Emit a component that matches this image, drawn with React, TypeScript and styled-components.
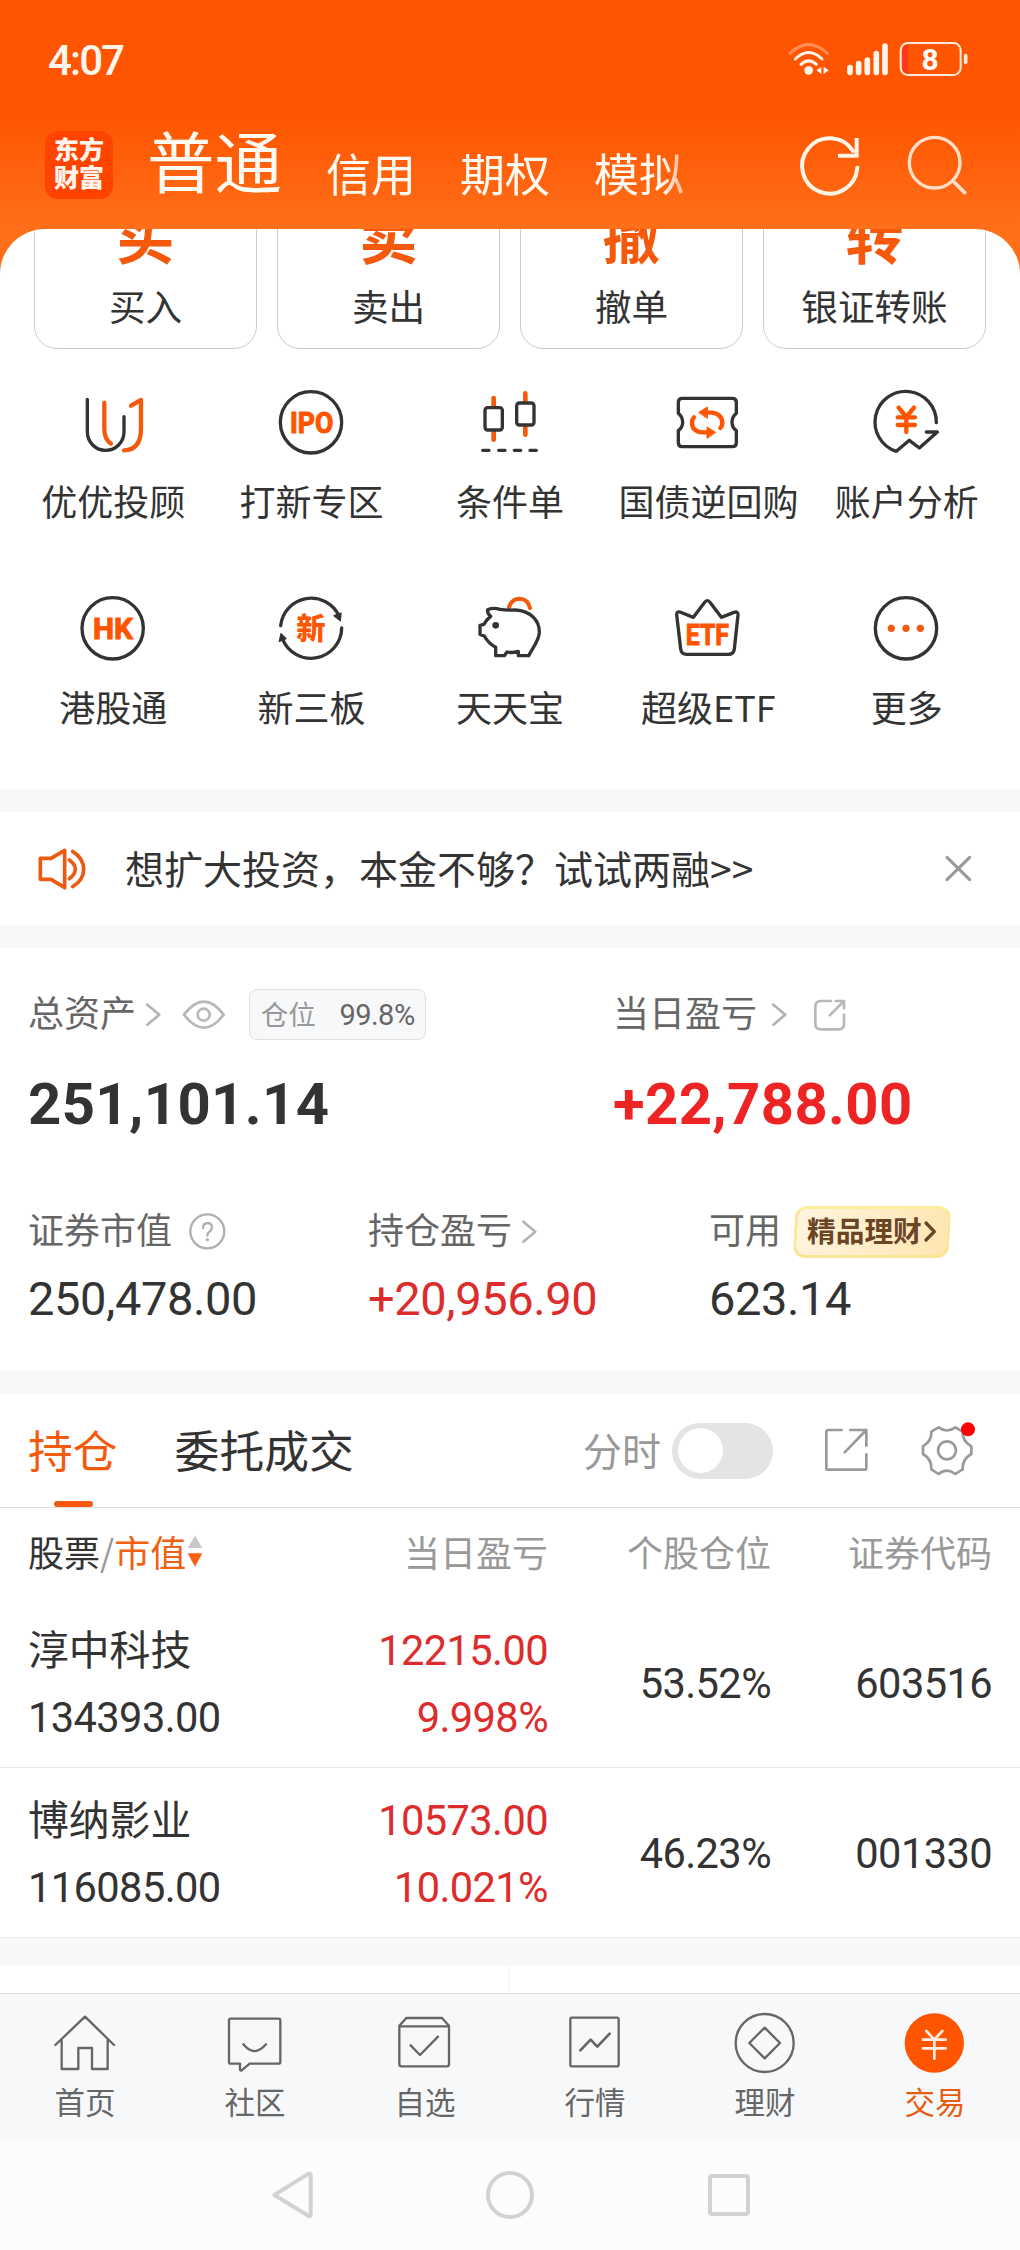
import React from "react";
import styled, { createGlobalStyle, css } from "styled-components";

const CJK = '"Noto Sans CJK SC", "Noto Sans", sans-serif';
const NUM = 'Roboto, "Noto Sans CJK SC", sans-serif';
const INK = "#333333";
const ORANGE = "#f55a0c";
const BRAND = "#ff5500";
const RED = "#dc2c2c";

const GlobalStyle = createGlobalStyle`
  * { box-sizing: border-box; }
  body { margin: 0; background: #fff; font-family: ${CJK}; color: ${INK}; }
  svg { display: block; flex: none; overflow: visible; }
`;

/* Icons are drawn on a grid of three units per pixel. */
interface GlyphProps {
  box: [number, number, number, number];
  stroke?: string;
  weight?: number;
  children: React.ReactNode;
}
const Glyph = ({ box, stroke = INK, weight = 10, children }: GlyphProps) => (
  <svg
    width={box[2] / 3}
    height={box[3] / 3}
    viewBox={box.join(" ")}
    fill="none"
    stroke={stroke}
    strokeWidth={weight}
    strokeLinecap="round"
    strokeLinejoin="round"
  >
    {children}
  </svg>
);

const Screen = styled.div`
  width: 1020px;
  height: 2250px;
  overflow: hidden;
  display: flex;
  flex-direction: column;
  background: linear-gradient(#ff5500 0 115px, #ff6e19 225px, #ff6e19 300px, #fff 300px);
`;

/* ---------- header ---------- */
const StatusBar = styled.div`
  height: 119px;
  padding: 37px 52px 0 48px;
  display: flex;
  justify-content: space-between;
  align-items: flex-start;
  color: #fff6ee;
`;
const Clock = styled.span`
  font: 500 42px/48px ${NUM};
  letter-spacing: -1.9px;
`;
const StatusIcons = styled.div`
  display: flex;
  padding-top: 3px;
`;
const TitleBar = styled.div`
  height: 110px;
  padding: 12px 50px 0 45px;
  display: flex;
  align-items: flex-start;
`;
const Logo = styled.div`
  width: 68px;
  height: 68px;
  border-radius: 13px;
  background: #ff4400;
  color: #fff4ee;
  font-family: ${NUM};
  font-size: 25px;
  font-weight: 900;
  line-height: 28px;
  padding-top: 6px;
  text-align: center;
`;
const AccountTabs = styled.div`
  display: flex;
  align-items: baseline;
  width: 550px;
  height: 98px;
  margin: -12px 0 0 34px;
  mask-image: linear-gradient(90deg, #000 515px, rgba(0, 0, 0, 0.55) 537px);
`;
const AccountTab = styled.span<{ $active?: boolean }>`
  color: #fffaf2;
  white-space: nowrap;
  font-size: ${(p) => (p.$active ? 67.5 : 45)}px;
  line-height: 80px;
  margin-right: 44px;
  transform: translateY(${(p) => (p.$active ? 0 : 4)}px);
`;
const HeaderTools = styled.div`
  display: flex;
  margin-left: auto;
  padding-top: 2px;
  gap: 42px;
`;

/* ---------- main panel ---------- */
const Panel = styled.main`
  height: 560px;
  flex: none;
  background: #fff;
  border-radius: 45px 45px 0 0;
  overflow: hidden;
`;
const ActionRow = styled.div`
  display: flex;
  gap: 20px;
  padding: 0 34px;
  margin-top: -60px;
`;
const ActionCard = styled.div`
  flex: 1;
  height: 180px;
  border: 1px solid #cccccc;
  border-radius: 23px;
  display: flex;
  flex-direction: column;
  align-items: center;
`;
const ActionMark = styled.span`
  margin-top: 32px;
  font-size: 58px;
  line-height: 64px;
  font-weight: 700;
  color: ${ORANGE};
`;
const ActionLabel = styled.span`
  margin-top: 15px;
  font-size: 36.6px;
  line-height: 50px;
`;
const ServiceGrid = styled.div`
  display: grid;
  grid-template-columns: repeat(5, 1fr);
  row-gap: 68px;
  padding: 38px 14px 0;
`;
const Service = styled.div`
  display: flex;
  flex-direction: column;
  align-items: center;
`;
const ServiceLabel = styled.span`
  margin-top: 18px;
  font-size: 36px;
  line-height: 50px;
  white-space: nowrap;
`;

const Band = styled.div<{ $h?: number }>`
  height: ${(p) => p.$h ?? 23}px;
  flex: none;
  background: #f7f8fa;
`;

const Notice = styled.div`
  height: 113px;
  flex: none;
  background: #fff;
  display: flex;
  align-items: center;
  padding: 0 48px 0 36px;
`;
const NoticeText = styled.span`
  flex: 1;
  margin-left: 37px;
  padding-bottom: 4px;
  font-size: 39px;
  line-height: 56px;
`;

/* ---------- assets ---------- */
const Assets = styled.section`
  height: 423px;
  flex: none;
  background: #fff;
  padding: 40px 0 0 28px;
`;
const AssetGrid = styled.div<{ $cols: string; $top?: number }>`
  display: grid;
  grid-template-columns: ${(p) => p.$cols};
  margin-top: ${(p) => p.$top ?? 0}px;
`;
const LabelRow = styled.div`
  display: flex;
  align-items: center;
  height: 53px;
`;
const Label = styled.span`
  font-size: 36px;
  line-height: 46px;
  padding-bottom: 7px;
  color: #666;
  white-space: nowrap;
`;
const Gap = styled.span<{ $w: number }>`
  width: ${(p) => p.$w}px;
  flex: none;
`;
const BigNumber = styled.div<{ $red?: boolean }>`
  margin-top: 33px;
  font: 700 58px/60px ${NUM};
  letter-spacing: 0.4px;
  color: ${(p) => (p.$red ? "#ee2424" : INK)};
`;
const MidNumber = styled.div<{ $red?: boolean }>`
  margin-top: 16px;
  font: 400 47px/50px ${NUM};
  letter-spacing: -0.4px;
  color: ${(p) => (p.$red ? RED : INK)};
`;
const PositionChip = styled.span`
  width: 177px;
  height: 51px;
  border: 1px solid #e0e0e3;
  border-radius: 8px;
  background: #f7f8fa;
  display: flex;
  align-items: center;
  justify-content: space-between;
  padding: 0 10px 0 11px;
  font-size: 27.5px;
  line-height: 40px;
  color: #999;
  b {
    font: 400 29px/40px ${NUM};
    letter-spacing: -0.5px;
    color: #666;
  }
  span { padding-bottom: 3px; }
`;
const WealthBadge = styled.span`
  position: relative;
  z-index: 0;
  width: 158px;
  height: 52px;
  display: flex;
  align-items: center;
  padding-left: 14px;
  font-size: 28.7px;
  line-height: 40px;
  font-weight: 700;
  color: #6a4526;
  &::before {
    content: "";
    position: absolute;
    z-index: -1;
    inset: 0 1px;
    border-radius: 12px;
    border: 3px solid #fae795;
    border-top-color: #fbee9c;
    background: linear-gradient(100deg, #fff4de, #ffe6b2);
    transform: skewX(-3deg);
  }
  span { padding-bottom: 3px; white-space: nowrap; }
`;

/* ---------- holdings ---------- */
const TabRow = styled.div`
  height: 114px;
  flex: none;
  background: #fff;
  border-bottom: 1px solid #dedede;
  display: flex;
  align-items: center;
  padding: 0 45px 0 28px;
`;
const Tab = styled.span<{ $active?: boolean }>`
  position: relative;
  font-size: 44.8px;
  line-height: 60px;
  padding-bottom: 4px;
  margin-right: 57px;
  white-space: nowrap;
  color: ${(p) => (p.$active ? ORANGE : INK)};
  ${(p) =>
    p.$active &&
    css`
      &::after {
        content: "";
        position: absolute;
        left: 26px;
        bottom: -24px;
        width: 39px;
        height: 6px;
        border-radius: 3px;
        background: ${ORANGE};
      }
    `}
`;
const MinuteLabel = styled.span`
  margin-left: auto;
  padding-bottom: 4px;
  font-size: 39px;
  line-height: 56px;
  color: #999;
`;
const Toggle = styled.span`
  width: 101px;
  height: 56px;
  margin: 0 52px 0 11px;
  border-radius: 28px;
  background: #e4e4e6;
  padding: 5px 6px;
  &::after {
    content: "";
    display: block;
    width: 45px;
    height: 45px;
    border-radius: 50%;
    background: #fff;
  }
`;
const rowGrid = css`
  display: grid;
  grid-template-columns: 297px 223px 223px 221px;
  padding: 0 28px;
  background: #fff;
  flex: none;
  text-align: right;
`;
const TableHead = styled.div`
  ${rowGrid};
  height: 90px;
  padding-top: 18px;
  font-size: 36px;
  line-height: 50px;
  color: #999;
`;
const SortHead = styled.span`
  display: flex;
  align-items: center;
  text-align: left;
  height: 50px;
  b { font-weight: 400; color: ${INK}; }
  em { font-style: normal; color: #f06010; margin-right: 1px; }
`;
const Holding = styled.div`
  ${rowGrid};
  height: 170px;
  border-bottom: 1px solid #e8e9eb;
  align-items: center;
`;
const Stack = styled.div<{ $left?: boolean }>`
  align-self: start;
  text-align: ${(p) => (p.$left ? "left" : "right")};
`;
const StockName = styled.div`
  margin-top: 20px;
  font-size: 40.8px;
  line-height: 60px;
`;
const Figure = styled.div<{ $red?: boolean; $top?: number }>`
  margin-top: ${(p) => p.$top ?? 2}px;
  font: 400 41.6px/60px ${NUM};
  letter-spacing: -0.6px;
  color: ${(p) => (p.$red ? RED : INK)};
`;
const Peek = styled.div`
  height: 27px;
  flex: none;
  background: linear-gradient(90deg, #fff 509px, #f4f5f7 509px 510px, #fff 510px);
`;

/* ---------- bottom ---------- */
const BottomNav = styled.nav`
  height: 147px;
  flex: none;
  border-top: 1px solid #dfe0e3;
  background: #f7f8fa;
  display: grid;
  grid-template-columns: repeat(6, 1fr);
  padding-top: 14px;
`;
const NavItem = styled.div<{ $active?: boolean }>`
  display: flex;
  flex-direction: column;
  align-items: center;
  gap: 1px;
  font-size: 30.5px;
  line-height: 44px;
  color: ${(p) => (p.$active ? "#e85c12" : "#666")};
`;
const SystemBar = styled.div`
  flex: 1;
  background: #fcfcfc;
  display: flex;
  justify-content: center;
  align-items: center;
  gap: 167px;
`;

const Chevron = () => (
  <Glyph box={[434, 697, 50, 76]} stroke="#b3b3b3" weight={8}>
    <path d="M441 705 L477 735 L441 765" />
  </Glyph>
);

const WordMark = ({ x, y, w, size, children }: { x: number; y: number; w: number; size: number; children: string }) => (
  <text
    x={x}
    y={y}
    textLength={w}
    lengthAdjust="spacingAndGlyphs"
    fontFamily={NUM}
    fontWeight={700}
    fontSize={size}
    fill={BRAND}
    stroke={BRAND}
    strokeWidth={3}
  >
    {children}
  </text>
);

const actions = [
  ["买", "买入"],
  ["卖", "卖出"],
  ["撤", "撤单"],
  ["转", "银证转账"],
];

const services: { label: string; icon: React.ReactNode }[] = [
  {
    label: "优优投顾",
    icon: (
      <Glyph box={[234, 81, 210, 210]}>
        <path d="M262 118 V216 a55 55 0 0 0 110 0 V170" />
        <path d="M313 128 V208 Q313 238 333 251 M393 137 L423 120 V205 Q423 271 372 271" stroke={ORANGE} strokeWidth={13} />
      </Glyph>
    ),
  },
  {
    label: "打新专区",
    icon: (
      <Glyph box={[830, 81, 210, 210]}>
        <circle cx={932} cy={187} r={92} />
        <WordMark x={869} y={218} w={130} size={86}>IPO</WordMark>
      </Glyph>
    ),
  },
  {
    label: "条件单",
    icon: (
      <Glyph box={[1425, 81, 210, 210]}>
        <path d="M1481 114 V143 M1481 210 V239 M1576 100 V129 M1576 195 V224" stroke={ORANGE} strokeWidth={14} />
        <rect x={1455} y={143} width={52} height={67} rx={8} fill="#fff" />
        <rect x={1550} y={129} width={52} height={66} rx={8} fill="#fff" />
        <path d="M1448 271 H1467 M1496 271 H1515 M1543 271 H1562 M1590 271 H1609" />
      </Glyph>
    ),
  },
  {
    label: "国债逆回购",
    icon: (
      <Glyph box={[490, 81, 210, 210]}>
        <path d="M518 115 H668 Q680 115 680 127 V160 Q667 170 667 187 Q667 203 680 212 V248 Q680 260 668 260 H518 Q506 260 506 248 V212 Q519 203 519 187 Q519 170 506 160 V127 Q506 115 518 115Z" />
        <path d="M592 158 H608 Q638 163 638 190 Q638 198 632 204 M553 172 Q547 178 547 188 Q547 214 578 217 H594" stroke={BRAND} strokeWidth={13} />
        <path d="M568 157 L593 141 V174Z M617 217 L592 201 V234Z" fill={BRAND} stroke={BRAND} strokeWidth={3} />
      </Glyph>
    ),
  },
  {
    label: "账户分析",
    icon: (
      <Glyph box={[1085, 81, 210, 210]}>
        <path d="M1278 188 A92 92 0 1 0 1158 274 L1197 241 L1227 264 L1281 216 H1248" />
        <path d="M1165 143 L1188 171 L1211 143 M1188 171 V216 M1162 172 H1214 M1162 195 H1214" stroke={BRAND} strokeWidth={13} />
      </Glyph>
    ),
  },
  {
    label: "港股通",
    icon: (
      <Glyph box={[234, 699, 210, 210]}>
        <circle cx={338} cy={805} r={92} />
        <WordMark x={279} y={837} w={120} size={86}>HK</WordMark>
      </Glyph>
    ),
  },
  {
    label: "新三板",
    icon: (
      <Glyph box={[830, 699, 210, 210]}>
        <path d="M841 797 A92 92 0 0 1 1016 768 M1024 804 A92 92 0 0 1 847 838" />
        <path d="M1001 767 L1022 759 L1020 782Z M842 821 L837 844 L857 836Z" fill={INK} stroke={INK} strokeWidth={4} />
        <text x={932} y={837} textAnchor="middle" fontFamily={CJK} fontWeight={900} fontSize={88} fill={BRAND} stroke="none">
          新
        </text>
      </Glyph>
    ),
  },
  {
    label: "天天宝",
    icon: (
      <Glyph box={[1425, 699, 210, 210]}>
        <path d="M1527 742 Q1535 716 1558 716 Q1584 717 1590 744" stroke={ORANGE} strokeWidth={12} />
        <path d="M1463 749 Q1480 742 1500 748 Q1520 751 1545 750 C1595 752 1619 785 1618 818 C1616 845 1598 862 1586 887 H1555 V874 Q1535 880 1521 876 L1513 887 H1487 V862 Q1465 850 1453 828 L1440 823 V796 L1452 793 Q1459 779 1472 769 Q1461 760 1463 749Z" fill="#fff" />
        <circle cx={1487} cy={796} r={10} fill={INK} stroke="none" />
      </Glyph>
    ),
  },
  {
    label: "超级ETF",
    icon: (
      <Glyph box={[490, 699, 210, 210]}>
        <path d="M501 764 Q501 752 513 757 L551 772 L584 728 Q593 716 602 728 L635 772 L673 757 Q686 753 685 765 L674 867 Q672 883 656 883 H531 Q515 883 513 867Z" />
        <WordMark x={528} y={854} w={130} size={86}>ETF</WordMark>
      </Glyph>
    ),
  },
  {
    label: "更多",
    icon: (
      <Glyph box={[1085, 699, 210, 210]}>
        <circle cx={1187} cy={805} r={92} />
        {[1143, 1187, 1230].map((x) => (
          <circle key={x} cx={x} cy={805} r={11} fill={ORANGE} stroke="none" />
        ))}
      </Glyph>
    ),
  },
];

const holdings = [
  { name: "淳中科技", value: "134393.00", pnl: "12215.00", rate: "9.998%", share: "53.52%", code: "603516" },
  { name: "博纳影业", value: "116085.00", pnl: "10573.00", rate: "10.021%", share: "46.23%", code: "001330" },
];

const navItems: { label: string; active?: boolean; x: number; shape: React.ReactNode }[] = [
  { label: "首页", x: 150, shape: <path d="M166 256 L255 171 L342 256 M185 240 V328 H235 V265 H276 V328 H323 V240" /> },
  {
    label: "社区",
    x: 660,
    shape: (
      <path d="M692 177 H836 Q841 177 841 182 V306 Q841 312 835 312 H749 L724 333 L720 331 V312 H692 Q687 312 687 307 V182 Q687 177 692 177Z M730 254 Q763 295 798 254" />
    ),
  },
  {
    label: "自选",
    x: 1170,
    shape: (
      <path d="M1198 198 L1219 175 H1326 L1347 198 V314 Q1347 320 1341 320 H1204 Q1198 320 1198 314Z M1198 200 H1347 M1232 257 L1260 286 L1314 231" />
    ),
  },
  {
    label: "行情",
    x: 150,
    shape: (
      <>
        <rect x={181} y={174} width={145} height={146} rx={5} />
        <path d="M211 272 L242 240 L262 261 L299 222" strokeWidth={8} />
      </>
    ),
  },
  {
    label: "理财",
    x: 660,
    shape: (
      <>
        <circle cx={764} cy={250} r={87} />
        <path d="M764 204 L810 250 L764 296 L718 250Z" />
      </>
    ),
  },
  {
    label: "交易",
    active: true,
    x: 1170,
    shape: (
      <>
        <circle cx={1273} cy={250} r={89} fill={BRAND} stroke="none" />
        <path d="M1249 214 L1273 240 L1297 214 M1273 240 V297 M1239 240 H1307 M1239 266 H1307" stroke="#ffeee4" strokeWidth={8} />
      </>
    ),
  },
];

export default function App() {
  return (
    <Screen>
      <GlobalStyle />
      <StatusBar>
        <Clock>4:07</Clock>
        <StatusIcons>
          <Glyph box={[832, 120, 174, 110]} stroke="#fff6ee" weight={9}>
            <path d="M838 160 Q894 108 950 160" opacity={0.35} />
            <path d="M854 177 Q894 138 934 177 M871 193 Q894 172 917 193" />
            <circle cx={894} cy={211} r={13} fill="#fff6ee" stroke="none" />
            <path d="M917 211 L932 200 V222Z M954 211 L939 200 V222Z" fill="#fff6ee" stroke="none" />
          </Glyph>
          <Glyph box={[1006, 120, 156, 110]} stroke="#fff6ee" weight={17}>
            <path d="M1018 203 V217 M1044 191 V217 M1070 180 V217 M1097 161 V217 M1123 138 V217" />
          </Glyph>
          <Glyph box={[1162, 120, 210, 110]} stroke="#ffe9dc" weight={6}>
            <path d="M1192 135 V219 Q1176 219 1176 203 V151 Q1176 135 1192 135Z" fill="#ff3322" stroke="none" />
            <rect x={1170} y={129} width={180} height={96} rx={22} />
            <path d="M1365 167 V187" strokeWidth={11} />
            <text x={1258} y={209} textAnchor="middle" fontFamily={NUM} fontWeight={700} fontSize={90} fill="#fff" stroke="none">
              8
            </text>
          </Glyph>
        </StatusIcons>
      </StatusBar>
      <TitleBar>
        <Logo>
          东方
          <br />
          财富
        </Logo>
        <AccountTabs>
          <AccountTab $active>普通</AccountTab>
          <AccountTab>信用</AccountTab>
          <AccountTab>期权</AccountTab>
          <AccountTab>模拟</AccountTab>
        </AccountTabs>
        <HeaderTools>
          <Glyph box={[858, 399, 195, 195]} stroke="#fff4e8" weight={12}>
            <path d="M1036 503 A83 83 0 1 1 1023 453" />
            <path d="M1034 420 V467 H984" strokeLinejoin="miter" strokeLinecap="square" />
          </Glyph>
          <Glyph box={[1179, 399, 195, 195]} stroke="#ffdfc8" weight={10}>
            <circle cx={1268} cy={488} r={76} />
            <path d="M1323 543 L1358 578" strokeWidth={11} />
          </Glyph>
        </HeaderTools>
      </TitleBar>

      <Panel>
        <ActionRow>
          {actions.map(([mark, label]) => (
            <ActionCard key={label}>
              <ActionMark>{mark}</ActionMark>
              <ActionLabel>{label}</ActionLabel>
            </ActionCard>
          ))}
        </ActionRow>
        <ServiceGrid>
          {services.map((s) => (
            <Service key={s.label}>
              {s.icon}
              <ServiceLabel>{s.label}</ServiceLabel>
            </Service>
          ))}
        </ServiceGrid>
      </Panel>

      <Band />
      <Notice>
        <Glyph box={[108, 216, 156, 156]} stroke="#ea5a10" weight={11}>
          <path d="M121 262 H153 L194 238 V350 L153 325 H121Z M208 267 Q226 280 226 295 Q226 310 208 323 M218 241 Q251 262 251 295 Q251 328 218 347" />
        </Glyph>
        <NoticeText>想扩大投资，本金不够？试试两融&gt;&gt;</NoticeText>
        <Glyph box={[1306, 255, 80, 80]} stroke="#999" weight={9}>
          <path d="M1312 262 L1380 329 M1380 262 L1312 329" />
        </Glyph>
      </Notice>
      <Band />

      <Assets>
        <AssetGrid $cols="585px 1fr">
          <div>
            <LabelRow>
              <Label>总资产</Label>
              <Gap $w={9} />
              <Chevron />
              <Gap $w={20} />
              <Glyph box={[545, 685, 132, 92]} stroke="#b8b8b8" weight={8}>
                <path d="M551 732 Q611 654 670 732 Q611 810 551 732Z" />
                <circle cx={610} cy={732} r={18} />
              </Glyph>
              <Gap $w={23} />
              <PositionChip>
                <span>仓位</span>
                <b>99.8%</b>
              </PositionChip>
            </LabelRow>
            <BigNumber>251,101.14</BigNumber>
          </div>
          <div>
            <LabelRow>
              <Label>当日盈亏</Label>
              <Gap $w={14} />
              <Chevron />
              <Gap $w={25} />
              <Glyph box={[908, 685, 102, 102]} stroke="#b8b8b8" weight={8}>
                <path d="M962 694 H932 Q915 694 915 711 V762 Q915 779 932 779 H984 Q1001 779 1001 762 V735 M976 694 H1001 V716 M1001 694 L958 737" />
              </Glyph>
            </LabelRow>
            <BigNumber $red>+22,788.00</BigNumber>
          </div>
        </AssetGrid>
        <AssetGrid $cols="340px 341px 1fr" $top={71}>
          <div>
            <LabelRow>
              <Label>证券市值</Label>
              <Gap $w={17} />
              <Glyph box={[566, 131, 110, 110]} stroke="#b0b0b0" weight={7}>
                <circle cx={621} cy={186} r={51} />
                <path d="M608 176 Q608 161 622 161 Q635 162 635 175 Q634 183 627 187 Q621 191 621 199" />
                <circle cx={621} cy={211} r={5} fill="#b0b0b0" stroke="none" />
              </Glyph>
            </LabelRow>
            <MidNumber>250,478.00</MidNumber>
          </div>
          <div>
            <LabelRow>
              <Label>持仓盈亏</Label>
              <Gap $w={9} />
              <Chevron />
            </LabelRow>
            <MidNumber $red>+20,956.90</MidNumber>
          </div>
          <div>
            <LabelRow>
              <Label>可用</Label>
              <Gap $w={12} />
              <WealthBadge>
                <span>精品理财</span>
                <Glyph box={[1238, 150, 50, 76]} stroke="#6a4526" weight={10}>
                  <path d="M1250 162 L1275 188 L1250 213" />
                </Glyph>
              </WealthBadge>
            </LabelRow>
            <MidNumber>623.14</MidNumber>
          </div>
        </AssetGrid>
      </Assets>
      <Band />

      <TabRow>
        <Tab $active>持仓</Tab>
        <Tab>委托成交</Tab>
        <MinuteLabel>分时</MinuteLabel>
        <Toggle />
        <Glyph box={[945, 777, 129, 129]} stroke="#999" weight={8}>
          <path d="M995 780 H955 Q949 780 949 786 V893 Q949 899 955 899 H1063 Q1069 899 1069 893 V853 M1021 780 H1069 V827 M1069 780 L1004 847" />
        </Glyph>
        <Gap $w={52} />
        <Glyph box={[1230, 764, 165, 156]} stroke="#999" weight={8}>
          <path d="M1286 771 Q1310 790 1336 771 L1358 784 Q1356 812 1384 828 V851 Q1356 867 1358 897 L1336 911 Q1310 891 1286 911 L1264 897 Q1266 867 1239 851 V828 Q1266 812 1264 784Z" />
          <circle cx={1311} cy={840} r={27} />
          <circle cx={1374} cy={777} r={21} fill="#ff0000" stroke="none" />
        </Glyph>
      </TabRow>

      <TableHead>
        <SortHead>
          <b>股票</b>/<em>市值</em>
          <Glyph box={[560, 1102, 48, 100]} stroke="none">
            <path d="M584 1107 L606 1144 H562Z" fill="#c8c8c8" />
            <path d="M562 1160 H606 L584 1200Z" fill="#ff5f10" />
          </Glyph>
        </SortHead>
        <span>当日盈亏</span>
        <span>个股仓位</span>
        <span>证券代码</span>
      </TableHead>
      {holdings.map((h) => (
        <Holding key={h.code}>
          <Stack $left>
            <StockName>{h.name}</StockName>
            <Figure $top={10}>{h.value}</Figure>
          </Stack>
          <Stack>
            <Figure $red $top={23}>{h.pnl}</Figure>
            <Figure $red $top={7}>{h.rate}</Figure>
          </Stack>
          <Figure>{h.share}</Figure>
          <Figure>{h.code}</Figure>
        </Holding>
      ))}
      <Band $h={28} />
      <Peek />

      <BottomNav>
        {navItems.map((n) => (
          <NavItem key={n.label} $active={n.active}>
            <Glyph box={[n.x, 145, 210, 210]} stroke="#666" weight={7}>
              {n.shape}
            </Glyph>
            {n.label}
          </NavItem>
        ))}
      </BottomNav>
      <SystemBar>
        <Glyph box={[792, 630, 162, 150]} stroke="#d2d2d2" weight={12}>
          <path d="M823 705 L926 641 Q932 640 932 647 V763 Q932 770 926 768Z" />
        </Glyph>
        <Glyph box={[1455, 630, 150, 150]} stroke="#d2d2d2" weight={12}>
          <circle cx={1530} cy={705} r={66} />
        </Glyph>
        <Glyph box={[570, 630, 162, 150]} stroke="#d2d2d2" weight={12}>
          <rect x={594} y={648} width={114} height={114} rx={6} />
        </Glyph>
      </SystemBar>
    </Screen>
  );
}
